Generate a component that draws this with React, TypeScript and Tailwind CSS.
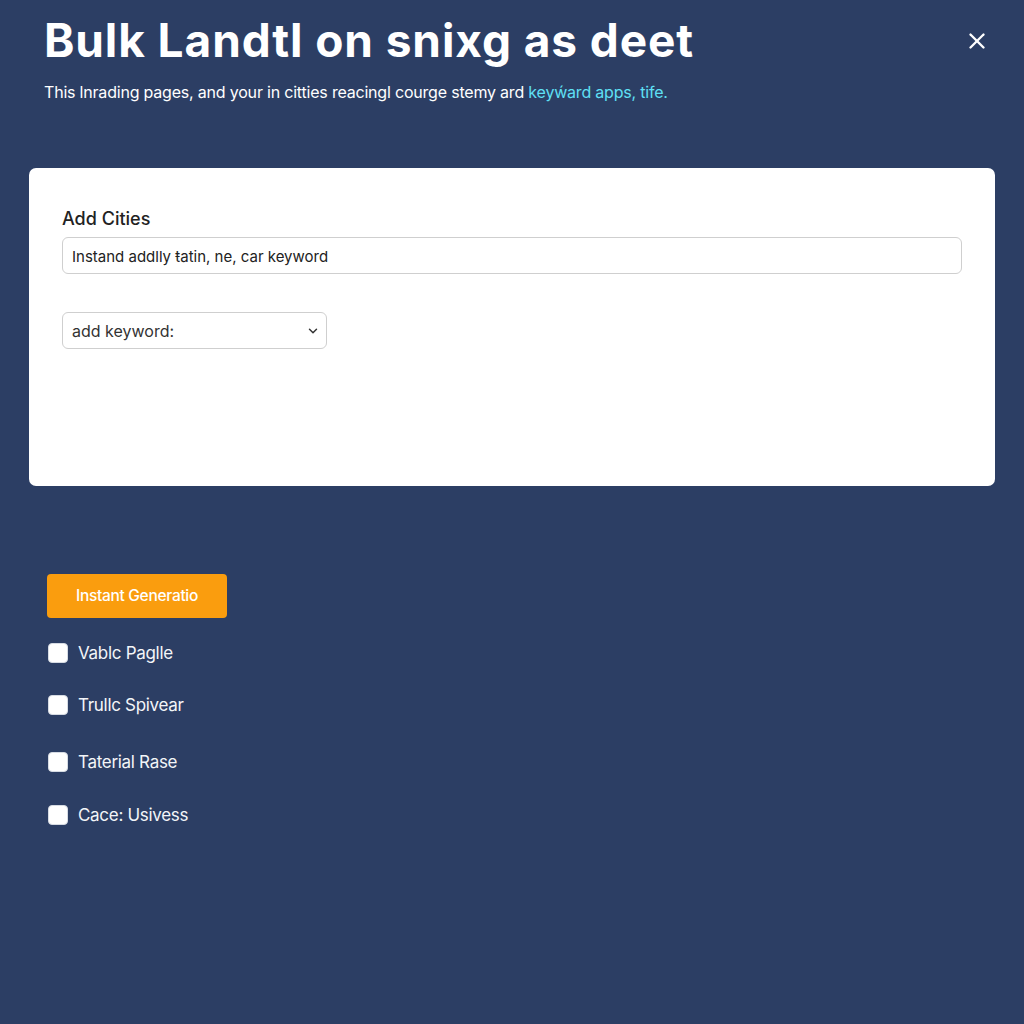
import { X, ChevronDown } from "lucide-react"

const options = [
  { label: "Vablc Paglle", mt: "mt-[23px]" },
  { label: "Trullc Spivear", mt: "mt-[28px]" },
  { label: "Taterial Rase", mt: "mt-[33px]" },
  { label: "Cace: Usivess", mt: "mt-[29px]" },
]

export default function App() {
  return (
    <div className="min-h-screen w-full bg-[#2c3e64] font-['Inter','Liberation_Sans',sans-serif] text-white">
      <div className="relative px-[44px] pt-[12px]">
        <h1 className="text-[46px] font-bold leading-[56px] tracking-[0.9px]">Bulk Landtl on snixg as deet</h1>
        <p className="mt-[13px] text-[16px] leading-[22px] tracking-[-0.2px] text-white">
          This lnrading pages, and your in citties reacingl courge stemy ard{" "}
          <span className="text-[#5fe0f5]">keyẃard apps, tife.</span>
        </p>
        <button className="absolute right-[34px] top-[28px] text-white">
          <X size={26} strokeWidth={2.2} />
        </button>
      </div>

      <div className="mx-[29px] mt-[65px] h-[318px] rounded-[7px] bg-white px-[33px] pt-[40px] text-[#222]">
        <label className="block text-[18px] font-medium leading-[22px]">Add Cities</label>
        <div className="mt-[7px] flex h-[37px] w-full items-center rounded-[6px] border border-[#cfcfcf] px-[9px] pt-[4px] text-[15px] text-[#222]">
          Instand addlly ŧatin, ne, car keyword
        </div>
        <div className="mt-[38px] flex h-[37px] w-[265px] items-center justify-between rounded-[6px] border border-[#cfcfcf] pl-[9px] pr-[6px] text-[16px] text-[#333]">
          <span>add keyword:</span>
          <ChevronDown size={14} strokeWidth={2.5} className="text-[#333]" />
        </div>
      </div>

      <div className="px-[47px] pt-[88px]">
        <button className="flex h-[44px] w-[180px] items-center justify-center rounded-[4px] bg-[#fa9d0e] text-[15.5px] font-medium tracking-[-0.3px] text-white">
          Instant Generatio
        </button>
        {options.map((o) => (
          <div key={o.label} className={`${o.mt} flex items-center gap-[10px] pl-[1px]`}>
            <span className="h-[20px] w-[20px] rounded-[4px] border border-[#d6dbe3] bg-white" />
            <span className="text-[17px] leading-[24px] tracking-[-0.3px] text-[#f3f5f8]">{o.label}</span>
          </div>
        ))}
      </div>
    </div>
  )
}
